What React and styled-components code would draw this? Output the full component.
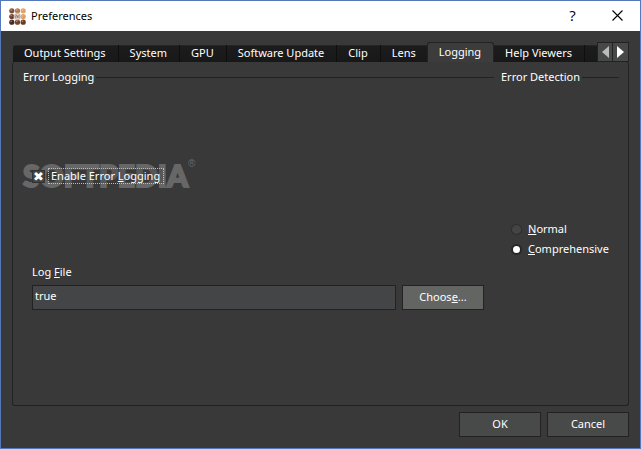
import React, { useState } from "react";
import styled, { createGlobalStyle } from "styled-components";

const Global = createGlobalStyle`
  * { box-sizing: border-box; }
  body { margin: 0; }
  body, button, input {
    font-family: "Noto Sans", "Open Sans", sans-serif;
    font-size: 11px;
    line-height: 16px;
    color: #fff;
  }
`;

const Window = styled.div`
  display: flex;
  flex-direction: column;
  min-height: 100vh;
  border: 1px solid #5577bb;
  background: #393939;
`;

const TitleBar = styled.header`
  display: flex;
  align-items: center;
  height: 30px;
  padding-left: 8px;
  background: #fff;
  color: #000;
`;

const Title = styled.h1`
  flex: 1;
  margin: 0 0 0 5px;
  font-size: 11px;
  font-weight: 400;
`;

const TitleButton = styled.button`
  display: flex;
  align-items: center;
  justify-content: center;
  width: 45px;
  height: 30px;
  padding: 0 0 2px;
  border: 0;
  background: transparent;
  color: #000;
  font-family: "Open Sans", sans-serif;
  font-size: 15px;
`;

const Body = styled.main`
  flex: 1;
  display: flex;
  flex-direction: column;
  padding: 11px;
`;

const TabStrip = styled.div`
  display: flex;
  align-items: flex-end;
  height: 20px;
`;

const Tabs = styled.div`
  flex: 1;
  min-width: 0;
  display: flex;
  align-items: flex-end;
  padding-left: 1px;
  overflow: hidden;
`;

const Tab = styled.button`
  flex: none;
  min-width: 40px;
  height: ${(p) => (p.$active ? 20 : 17)}px;
  margin-left: ${(p) => (p.$active ? -2 : 0)}px;
  padding: 0 12px ${(p) => (p.$active ? 1 : 2)}px 11px;
  border: solid ${(p) => (p.$active ? "#222" : "#0e0e0e")};
  border-width: ${(p) => (p.$active ? "1px 1px 0" : "0 1px 0 0")};
  border-radius: ${(p) => (p.$active ? "3px 3px 0 0" : "0")};
  background: ${(p) => (p.$active ? "#3c3c3c" : "linear-gradient(#20262a 0 1px, #1c1c1c 1px, #181818)")};
  white-space: nowrap;
  &:first-child { border-top-left-radius: 3px; }
`;

const ScrollButton = styled.button`
  flex: none;
  display: flex;
  align-items: center;
  justify-content: center;
  width: 16px;
  height: 20px;
  padding: 0 0 1px;
  border: 1px solid #222;
  background: #474949;
  color: ${(p) => (p.$dim ? "#bbb" : "#fff")};
  & + & { margin-left: -1px; width: 17px; }
`;

const Panel = styled.section`
  flex: 1;
  display: grid;
  grid-template-columns: minmax(0, 1fr) 118px;
  column-gap: 7px;
  padding: 7px 9px 7px 10px;
  border: 1px solid #222;
  border-top: 0;
  border-radius: 3px;
`;

const Group = styled.div`
  display: flex;
  flex-direction: column;
`;

const Legend = styled.h2`
  display: flex;
  align-items: center;
  gap: 2px;
  margin: 0;
  font-size: 11px;
  font-weight: 400;
  white-space: nowrap;
  &::after {
    content: "";
    flex: 1;
    height: 1px;
    background: #222;
  }
`;

const CheckRow = styled.div`
  position: relative;
  display: flex;
  height: 28px;
  align-items: center;
  margin-top: 77px;
  padding-left: 9px;
`;

const Watermark = styled.span`
  position: absolute;
  left: 0;
  top: -3px;
  display: flex;
  color: #676767;
  font-family: Lato, sans-serif;
  font-size: 30px;
  font-weight: 900;
  line-height: 32px;
  -webkit-text-stroke: 2px #676767;
  pointer-events: none;
`;

const Registered = styled.span`
  font-family: "Liberation Sans", sans-serif;
  font-size: 10px;
  font-weight: 400;
  line-height: 10px;
  -webkit-text-stroke: 0;
`;

const CheckLabel = styled.label`
  position: relative;
  display: flex;
  align-items: center;
  gap: 4px;
`;

const Check = styled.input`
  appearance: none;
  display: grid;
  place-items: center;
  width: 13px;
  height: 13px;
  margin: 0;
  border: 1px solid #333;
  background: #434445;
  outline: 0;
  &:checked::before {
    content: "✖";
    font-family: "DejaVu Sans", sans-serif;
    font-size: 13px;
    line-height: 11px;
    color: #fff;
  }
`;

const FocusText = styled.span`
  height: 14px;
  padding: 0 3px 0 2px;
  outline: 1px dotted #bbb;
  background: rgba(57, 57, 57, 0.35);
  line-height: 13px;
`;

const Field = styled.div`
  display: flex;
  flex-direction: column;
  gap: 5px;
  margin: 74px 10px 0 9px;
`;

const FieldLabel = styled.label`
  align-self: flex-start;
`;

const FieldRow = styled.div`
  display: flex;
  gap: 6px;
`;

const TextBox = styled.input`
  flex: 1;
  min-width: 0;
  height: 25px;
  padding: 0 2px 4px;
  border: 1px solid #222;
  background: #444546;
  outline: 0;
`;

const Button = styled.button`
  flex: none;
  width: 82px;
  height: 25px;
  padding: 0 0 1px;
  border: 1px solid #222;
  background: ${(p) => (p.$hot ? "#636563" : "#484a49")};
`;

const Radios = styled.div`
  display: flex;
  flex-direction: column;
  gap: 4px;
  margin-top: 136px;
  padding-left: 10px;
`;

const RadioLabel = styled.label`
  display: flex;
  align-items: center;
  gap: 6px;
`;

const Radio = styled.input`
  appearance: none;
  flex: none;
  width: 11px;
  height: 11px;
  margin: 0;
  border: 1px solid #2b2b2b;
  border-radius: 50%;
  background: #434544;
  outline: 0;
  &:checked {
    border: 2px solid #272727;
    background: #fff;
  }
`;

const Actions = styled.footer`
  display: flex;
  justify-content: flex-end;
  gap: 6px;
  margin-top: 6px;
`;

const Key = styled.span`
  text-decoration: underline;
  text-underline-offset: 1px;
  text-decoration-skip-ink: none;
`;

const dots = [
  [2.3, 2.3, "#7d4f36"], [8, 2.3, "#b07a50"], [13.7, 2.3, "#e0a468"],
  [2.3, 8, "#6a4030"], [13.7, 8, "#dca064"],
  [2.3, 13.7, "#4a2a20"], [8, 13.7, "#74462e"], [13.7, 13.7, "#6a3c28"],
];

function AppIcon() {
  return (
    <svg width="17" height="17" viewBox="-0.5 -0.5 17 17" aria-hidden="true">
      {dots.map(([x, y, c]) => (
        <g key={`${x}-${y}`}>
          <circle cx={x} cy={y} r="2.6" fill={c} />
          <circle cx={x - 0.7} cy={y - 0.9} r="0.8" fill="#e7c6a8" opacity="0.6" />
        </g>
      ))}
      <circle cx="8" cy="8" r="3.8" fill="#eee5df" />
      <circle cx="8" cy="8" r="2.9" fill="none" stroke="#a88f84" strokeWidth="0.7" />
      <path d="M6.4 9.4V7.2q.8-.8 1.5 0v2.2M9.4 6.6v2.8" fill="none" stroke="#76564a" strokeWidth="0.8" />
    </svg>
  );
}

const tabs = ["Output Settings", "System", "GPU", "Software Update", "Clip", "Lens", "Logging", "Help Viewers"];

export default function App() {
  const [active, setActive] = useState("Logging");
  return (
    <Window>
      <Global />
      <TitleBar>
        <AppIcon />
        <Title>Preferences</Title>
        <TitleButton aria-label="Help">?</TitleButton>
        <TitleButton aria-label="Close">
          <svg width="11" height="11" viewBox="0 0 11 11">
            <path d="M.5.5l10 10M10.5.5l-10 10" stroke="#000" strokeWidth="1.1" />
          </svg>
        </TitleButton>
      </TitleBar>
      <Body>
        <TabStrip>
          <Tabs role="tablist">
            {tabs.map((t) => (
              <Tab key={t} role="tab" aria-selected={t === active} $active={t === active} onClick={() => setActive(t)}>
                {t}
              </Tab>
            ))}
            <Tab role="tab" aria-label="More" aria-selected={false} />
          </Tabs>
          <ScrollButton $dim aria-label="Scroll tabs left">
            <svg width="7" height="12" viewBox="0 0 7 12"><path d="M7 0v12L0 6z" fill="currentColor" /></svg>
          </ScrollButton>
          <ScrollButton aria-label="Scroll tabs right">
            <svg width="7" height="12" viewBox="0 0 7 12"><path d="M0 0v12l7-6z" fill="currentColor" /></svg>
          </ScrollButton>
        </TabStrip>
        <Panel role="tabpanel">
          <Group>
            <Legend>Error Logging</Legend>
            <CheckRow>
              <Watermark aria-hidden="true">SOFTPEDIA<Registered>®</Registered></Watermark>
              <CheckLabel>
                <Check type="checkbox" defaultChecked />
                <FocusText>Enable Error <Key>L</Key>ogging</FocusText>
              </CheckLabel>
            </CheckRow>
            <Field>
              <FieldLabel htmlFor="log-file">Log <Key>F</Key>ile</FieldLabel>
              <FieldRow>
                <TextBox id="log-file" type="text" defaultValue="true" />
                <Button $hot>Choos<Key>e</Key>...</Button>
              </FieldRow>
            </Field>
          </Group>
          <Group>
            <Legend>Error Detection</Legend>
            <Radios role="radiogroup" aria-label="Error Detection">
              <RadioLabel><Radio type="radio" name="detection" /><span><Key>N</Key>ormal</span></RadioLabel>
              <RadioLabel><Radio type="radio" name="detection" defaultChecked /><span><Key>C</Key>omprehensive</span></RadioLabel>
            </Radios>
          </Group>
        </Panel>
        <Actions>
          <Button>OK</Button>
          <Button>Cancel</Button>
        </Actions>
      </Body>
    </Window>
  );
}
